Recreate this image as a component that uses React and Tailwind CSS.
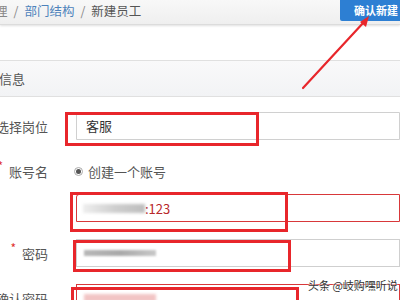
import React from "react";

const font = { fontFamily: '"Noto Sans CJK SC", "Noto Sans", sans-serif' };

function Label({ star, children }) {
  return (
    <div className="w-[48px] shrink-0 flex justify-end items-center text-[13px] text-[#555] leading-none whitespace-nowrap">
      {star && <span className="text-[#e0312f] text-[12px] mr-[6px] -mt-[10px]">*</span>}
      <span>{children}</span>
    </div>
  );
}

export default function App() {
  return (
    <div className="relative w-[400px] h-[300px] overflow-hidden bg-white" style={font}>
      {/* top bar */}
      <div className="flex justify-between items-start h-[25px] bg-gradient-to-b from-[#f8f8f8] to-[#efefef] border-b border-[#dcdcdc] shadow-[0_1px_2px_rgba(0,0,0,0.12)]">
        <div className="flex items-center h-[22px] -ml-[5px] text-[12.5px] leading-none text-[#888] whitespace-nowrap">
          <span>理</span>
          <span className="mx-[6px]">/</span>
          <span className="text-[#4d82bb]">部门结构</span>
          <span className="mx-[6px]">/</span>
          <span className="text-[#555]">新建员工</span>
        </div>
        <div className="w-[60px] h-[21px] bg-[#2d7fd3] rounded-bl-[2px] flex items-center pl-[14px] text-white text-[11px] font-bold whitespace-nowrap leading-none">
          确认新建
        </div>
      </div>

      {/* section header */}
      <div className="mt-[35px] h-[37px] border-y border-[#e0e0e0] bg-gradient-to-b from-[#f9f9fa] to-[#f2f3f5] flex items-center text-[13px] text-[#555] -ml-[1px]">
        <span>信息</span>
      </div>

      {/* rows */}
      <div className="flex flex-col">
        <div className="flex items-center mt-[15px]">
          <Label>选择岗位</Label>
          <div className="ml-[28px] flex-1 h-[28px] border border-[#d0d0d0] rounded-tl-[3px] flex items-center pl-[9px] text-[13px] text-[#333]">
            客服
          </div>
        </div>

        <div className="flex items-center mt-[21px] h-[20px]">
          <Label star>账号名</Label>
          <div className="ml-[26px] flex items-center text-[13px] text-[#555] leading-none whitespace-nowrap">
            <span className="w-[9px] h-[9px] rounded-full border border-[#aaa] bg-white flex items-center justify-center mr-[5px]">
              <span className="w-[5px] h-[5px] rounded-full bg-[#555]" />
            </span>
            创建一个账号
          </div>
        </div>

        <div className="flex items-center mt-[13px]">
          <div className="w-[48px] shrink-0" />
          <div className="ml-[28px] flex-1 h-[28px] border border-[#d8383a] rounded-tl-[3px] flex items-center pl-[6px] text-[13px]">
            <span className="w-[62px] h-[9px] bg-gradient-to-r from-[#eeeeee] via-[#cfcfcf] to-[#bdbdbd] blur-[1.5px]" />
            <span className="text-[#b8282b] leading-none">:123</span>
          </div>
        </div>

        <div className="flex items-center mt-[17px]">
          <Label star>密码</Label>
          <div className="ml-[28px] flex-1 h-[28px] border border-[#cfcfcf] flex items-center pl-[7px]">
            <span className="w-[72px] h-[6px] bg-gradient-to-r from-[#b8b8b8] via-[#a9a9a9] to-[#c8c8c8] blur-[1.2px]" />
          </div>
        </div>

        <div className="flex items-center mt-[17px]">
          <Label>确认密码</Label>
          <div className="ml-[28px] flex-1 h-[28px] border border-[#d8383a] flex items-center pl-[7px]">
            <span className="w-[72px] h-[8px] bg-[#f2c4c4] blur-[1.5px]" />
          </div>
        </div>
      </div>

      {/* red annotation boxes */}
      <div className="absolute left-[65px] top-[112px] w-[194px] h-[34px] border-[3px] border-[#e8262b]" />
      <div className="absolute left-[70px] top-[192px] w-[218px] h-[40px] border-[3px] border-[#e8262b]" />
      <div className="absolute left-[73px] top-[240px] w-[218px] h-[32px] border-[3px] border-[#e8262b]" />
      <div className="absolute left-[71px] top-[287px] w-[228px] h-[30px] border-[3px] border-[#e8262b]" />

      {/* arrow */}
      <svg className="absolute left-0 top-0" width="400" height="300" viewBox="0 0 400 300">
        <line x1="303" y1="88" x2="364" y2="22" stroke="#e8262b" strokeWidth="2.2" strokeLinecap="round" />
        <polygon points="369,16 360,22 366,27" fill="#e8262b" />
      </svg>

      {/* watermark */}
      <div
        className="absolute left-[308px] top-[280px] text-[11px] leading-none text-[#333] whitespace-nowrap"
        style={{ textShadow: "0 0 2px #fff, 0 0 2px #fff" }}
      >
        头条 @岐购嘿听说
      </div>
    </div>
  );
}
